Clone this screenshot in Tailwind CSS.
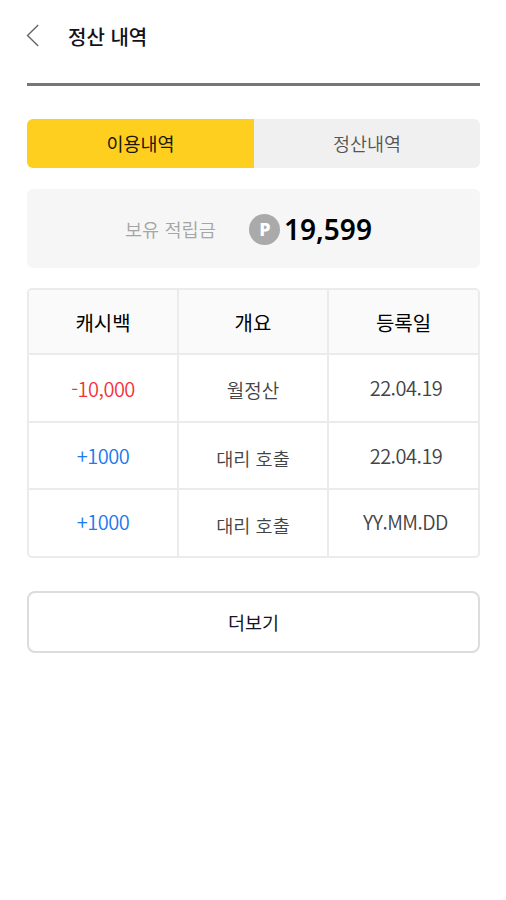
<!DOCTYPE html>
<html lang="ko">
<head>
<meta charset="utf-8">
<title>정산 내역</title>
<script src="https://cdn.jsdelivr.net/npm/@tailwindcss/browser@4"></script>
</head>
<body class="h-[900px] overflow-hidden bg-white font-['Noto_Sans_CJK_KR',sans-serif] text-[#222]">
<main class="flex w-[506px] flex-col pr-[26px] pl-[27px]">
  <header class="flex h-[86px] items-start border-b-[3px] border-[#75757a]">
    <svg class="-ml-[2px] mt-[22px] h-[26px] w-[16px]" viewBox="0 0 16 26" fill="none" stroke="#666" stroke-width="1.4"><path d="M13.2 3 L2.5 13.5 L13.2 24"/></svg>
    <h1 class="mt-[23px] ml-[27px] text-[20px] leading-[28px] font-medium text-[#111120]">정산 내역</h1>
  </header>
  <nav class="mt-[33px] flex h-[49px] overflow-hidden rounded-[6px] text-[18.5px]">
    <button class="w-[227px] bg-[#ffcf20] pt-[1px] font-normal text-[#1c1808]">이용내역</button>
    <button class="flex-1 bg-[#f0f0f0] pt-[1px] font-[350] text-[#555]">정산내역</button>
  </nav>
  <section class="mt-[21px] flex h-[79px] items-center rounded-[6px] bg-[#f6f6f6] pl-[98px]">
    <span class="w-[124px] pt-[1px] text-[18.6px] font-[350] text-[#a5a5a5]">보유 적립금</span>
    <span class="mt-[2px] flex size-[31px] items-center justify-center rounded-full bg-[#aaa] pl-[1px] font-['Noto_Sans',sans-serif] text-[18px] font-extrabold text-white">P</span>
    <strong class="ml-[4px] font-['Noto_Sans',sans-serif] text-[28px] leading-[40px] font-semibold text-black">19,599</strong>
  </section>
  <table class="mt-[20px] h-[270px] w-full table-fixed border-separate border-spacing-0 overflow-hidden rounded-[5px] border-2 border-[#ebebeb] text-center text-[20px] font-[350] tracking-[-0.5px] text-[#444]">
    <thead class="bg-[#fafafa] text-[20px] tracking-normal text-black">
      <tr class="h-[65px]">
        <th class="w-[150px] border-r-2 border-b-2 border-[#ebebeb] pt-[3px] font-normal">캐시백</th>
        <th class="w-[150px] border-r-2 border-b-2 border-[#ebebeb] pt-[3px] font-normal">개요</th>
        <th class="border-b-2 border-[#ebebeb] pt-[3px] font-normal">등록일</th>
      </tr>
    </thead>
    <tbody>
      <tr class="h-[68px]">
        <td class="border-r-2 border-b-2 border-[#ebebeb] pt-[2px] text-[#f4333b]">-10,000</td>
        <td class="border-r-2 border-b-2 border-[#ebebeb] pt-[4px] text-[19px] tracking-normal">월정산</td>
        <td class="border-b-2 border-[#ebebeb] pl-[5px]">22.04.19</td>
      </tr>
      <tr class="h-[67px]">
        <td class="border-r-2 border-b-2 border-[#ebebeb] text-[#2079ee]">+1000</td>
        <td class="border-r-2 border-b-2 border-[#ebebeb] pt-[4px] text-[18.6px] tracking-normal">대리 호출</td>
        <td class="border-b-2 border-[#ebebeb] pl-[5px]">22.04.19</td>
      </tr>
      <tr class="h-[66px]">
        <td class="border-r-2 border-[#ebebeb] pb-[2px] text-[#2079ee]">+1000</td>
        <td class="border-r-2 border-[#ebebeb] pt-[4px] text-[18.6px] tracking-normal">대리 호출</td>
        <td class="pb-[2px] pl-[4px] text-[19.5px]">YY.MM.DD</td>
      </tr>
    </tbody>
  </table>
  <button class="mt-[33px] h-[62px] rounded-[8px] border-2 border-[#dcdcdc] pt-[2px] text-[18.5px] font-normal text-[#151525]">더보기</button>
</main>
</body>
</html>
